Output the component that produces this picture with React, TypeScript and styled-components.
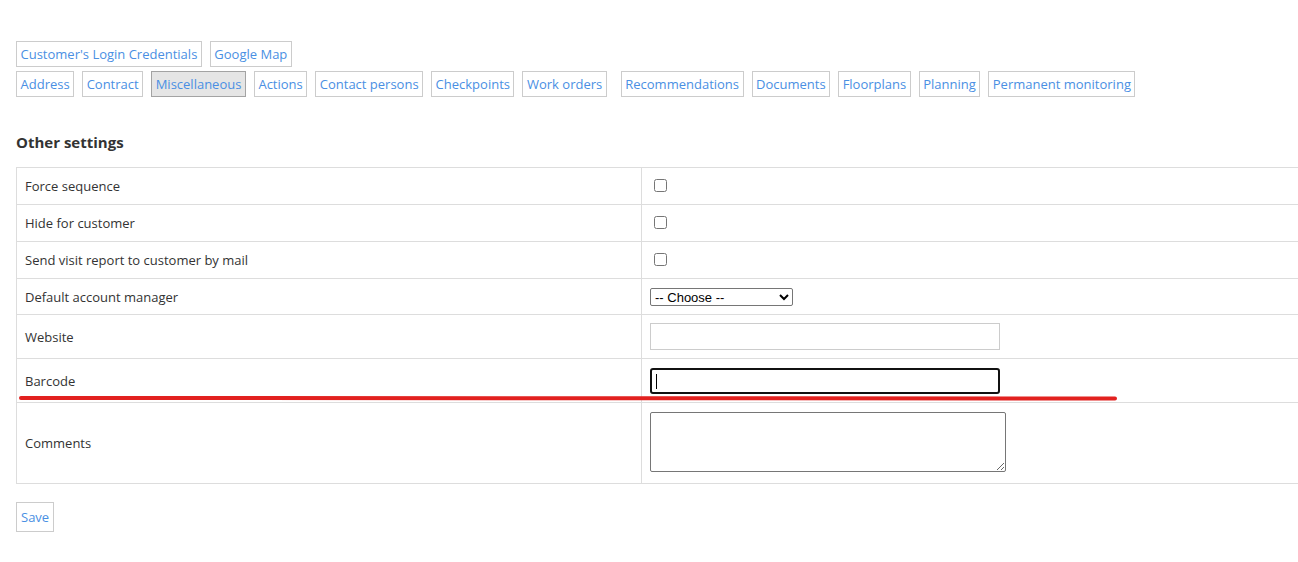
import React from "react";
import styled, { createGlobalStyle } from "styled-components";

const Global = createGlobalStyle`
  html, body {
    margin: 0;
    padding: 0;
    background: #ffffff;
    overflow: hidden;
  }
  body {
    font-family: "Open Sans", "Liberation Sans", sans-serif;
    font-size: 13px;
    color: #333333;
  }
`;

const Page = styled.div`
  position: relative;
  padding: 41px 0 0 16px;
  width: 1282px;
  height: 521px;
`;

const TabRows = styled.div`
  display: flex;
  flex-direction: column;
  gap: 4px;
`;

const TabRow = styled.div`
  display: flex;
  gap: 8px;
`;

const Tab = styled.a<{ $active?: boolean; $spaceBefore?: boolean }>`
  display: inline-block;
  padding: 3px 3.5px;
  line-height: 18px;
  font-size: 13px;
  text-decoration: none;
  color: #4a8fe3;
  border: 1px solid ${(p) => (p.$active ? "#a3a3a3" : "#cccccc")};
  background: ${(p) => (p.$active ? "#e5e5e5" : "#ffffff")};
  margin-left: ${(p) => (p.$spaceBefore ? "6px" : "0")};
  white-space: nowrap;
  cursor: pointer;
`;

const Heading = styled.h3`
  margin: 35px 0 15px 0;
  font-size: 15px;
  line-height: 20px;
  font-weight: 700;
  color: #333333;
`;

const Table = styled.table`
  border-collapse: collapse;
  width: 1300px;
  border: 1px solid #dddddd;
`;

const Row = styled.tr<{ $h: number }>`
  height: ${(p) => p.$h}px;
`;

const LabelCell = styled.td`
  width: 608px;
  padding: 0 8px;
  border: 1px solid #dddddd;
  vertical-align: middle;
  color: #333333;
  font-size: 13px;
`;

const ValueCell = styled.td`
  padding: 0 8px;
  border: 1px solid #dddddd;
  vertical-align: middle;
`;

const Check = styled.input.attrs({ type: "checkbox" })`
  width: 13px;
  height: 13px;
  margin: 2px 3px 4px 4px;
  vertical-align: middle;
`;

const Select = styled.select`
  width: 143px;
  height: 18px;
  font-family: "Liberation Sans", Arial, sans-serif;
  font-size: 13px;
  color: #000000;
  border: 1px solid #767676;
  border-radius: 2px;
  padding: 0;
  vertical-align: middle;
  background: #ffffff;
`;

const TextInput = styled.input<{ $focused?: boolean }>`
  box-sizing: border-box;
  width: 350px;
  height: ${(p) => (p.$focused ? 26 : 27)}px;
  border: ${(p) => (p.$focused ? "2px solid #111111" : "1px solid #cccccc")};
  border-radius: ${(p) => (p.$focused ? "3px" : "0")};
  outline: none;
  font-family: "Open Sans", sans-serif;
  font-size: 13px;
  padding: 0 6px;
  vertical-align: middle;
  display: block;
`;

const InputWrap = styled.span`
  position: relative;
  display: inline-block;
  vertical-align: middle;
`;

const Caret = styled.span`
  position: absolute;
  left: 6px;
  top: 6px;
  width: 1px;
  height: 15px;
  background: #000000;
`;

const TextArea = styled.textarea`
  box-sizing: border-box;
  width: 356px;
  height: 60px;
  margin-bottom: 3px;
  border: 1px solid #767676;
  border-radius: 2px;
  vertical-align: middle;
  font-family: "Open Sans", sans-serif;
  font-size: 13px;
  display: block;
`;

const SaveButton = styled.button`
  margin-top: 18px;
  padding: 5px 4px;
  line-height: 18px;
  font-family: "Open Sans", sans-serif;
  font-size: 13px;
  color: #4a8fe3;
  background: #ffffff;
  border: 1px solid #cccccc;
  cursor: pointer;
`;

const Annotation = styled.svg`
  position: absolute;
  left: 0;
  top: 0;
  pointer-events: none;
`;

const topTabs = ["Customer's Login Credentials", "Google Map"];
const mainTabs = [
  "Address",
  "Contract",
  "Miscellaneous",
  "Actions",
  "Contact persons",
  "Checkpoints",
  "Work orders",
  "Recommendations",
  "Documents",
  "Floorplans",
  "Planning",
  "Permanent monitoring",
];

export default function App() {
  return (
    <>
      <Global />
      <Page>
        <TabRows>
          <TabRow>
            {topTabs.map((t) => (
              <Tab key={t}>{t}</Tab>
            ))}
          </TabRow>
          <TabRow>
            {mainTabs.map((t) => (
              <Tab
                key={t}
                $active={t === "Miscellaneous"}
                $spaceBefore={t === "Recommendations"}
              >
                {t}
              </Tab>
            ))}
          </TabRow>
        </TabRows>

        <Heading>Other settings</Heading>

        <Table>
          <tbody>
            <Row $h={37}>
              <LabelCell>Force sequence</LabelCell>
              <ValueCell>
                <Check />
              </ValueCell>
            </Row>
            <Row $h={37}>
              <LabelCell>Hide for customer</LabelCell>
              <ValueCell>
                <Check />
              </ValueCell>
            </Row>
            <Row $h={37}>
              <LabelCell>Send visit report to customer by mail</LabelCell>
              <ValueCell>
                <Check />
              </ValueCell>
            </Row>
            <Row $h={36}>
              <LabelCell>Default account manager</LabelCell>
              <ValueCell>
                <Select defaultValue="">
                  <option value="">-- Choose --</option>
                </Select>
              </ValueCell>
            </Row>
            <Row $h={44}>
              <LabelCell>Website</LabelCell>
              <ValueCell>
                <TextInput type="text" />
              </ValueCell>
            </Row>
            <Row $h={44}>
              <LabelCell>Barcode</LabelCell>
              <ValueCell>
                <InputWrap>
                  <TextInput type="text" $focused />
                  <Caret />
                </InputWrap>
              </ValueCell>
            </Row>
            <Row $h={81}>
              <LabelCell>Comments</LabelCell>
              <ValueCell>
                <TextArea />
              </ValueCell>
            </Row>
          </tbody>
        </Table>

        <SaveButton>Save</SaveButton>

        <Annotation width="1298" height="562">
          <line
            x1="21"
            y1="398"
            x2="1115"
            y2="398.5"
            stroke="#e2211f"
            strokeWidth="4"
            strokeLinecap="round"
          />
        </Annotation>
      </Page>
    </>
  );
}
